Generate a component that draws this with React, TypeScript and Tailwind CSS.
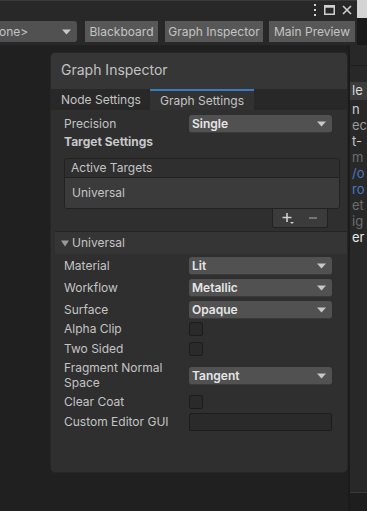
import React from "react";

const Arrow = () => (
  <svg width="9" height="6" viewBox="0 0 9 6" className="shrink-0">
    <path d="M0 0.5 H9 L4.5 5.5 Z" fill="#c8c8c8" />
  </svg>
);

const Dropdown = ({ value }: { value: string }) => (
  <div className="w-[143px] h-[18px] rounded-[3px] bg-[#515151] border-b border-[#3a3a3a] flex items-center justify-between pl-[3px] pr-[6px] text-[#e6e6e6] font-semibold text-[12px]">
    <span>{value}</span>
    <Arrow />
  </div>
);

const Check = () => (
  <div className="w-[14px] h-[14px] rounded-[2px] bg-[#2a2a2a] border border-[#1c1c1c]" />
);

const Row = ({ label, h, mt, children }: { label: React.ReactNode; h: string; mt: string; children: React.ReactNode }) => (
  <div className={`flex items-center pl-[13px] ${h} ${mt}`}>
    <div className="w-[125px] pb-[2px] text-[12px] leading-[15px] text-[#c4c4c4]">{label}</div>
    {children}
  </div>
);

const sideLines = [
  { t: "n", c: "text-[#d0d0d0]" },
  { t: "ec", c: "text-[#9a9a9a]" },
  { t: "t-", c: "text-[#c8c8c8]" },
  { t: "m", c: "text-[#6e6e6e]" },
  { t: "/o", c: "text-[#4a78c0]" },
  { t: "ro", c: "text-[#4a78c0]" },
  { t: "et", c: "text-[#6e6e6e]" },
  { t: "ig", c: "text-[#6e6e6e]" },
  { t: "er", c: "text-[#e8e8e8]" },
];

export default function App() {
  return (
    <div
      className="w-[367px] h-[511px] bg-[#202020] overflow-hidden flex flex-col"
      style={{ fontFamily: "Inter, 'Noto Sans', sans-serif" }}
    >
      {/* title strip */}
      <div className="flex h-[18px] shrink-0">
        <div className="w-[357px] bg-[#282828] border-t border-[#3a3a3a] flex items-center justify-end gap-[7px] pr-[5px]">
          <svg width="4" height="12" viewBox="0 0 4 12">
            <rect x="1" y="0" width="2" height="2" fill="#d0d0d0" />
            <rect x="1" y="5" width="2" height="2" fill="#d0d0d0" />
            <rect x="1" y="10" width="2" height="2" fill="#d0d0d0" />
          </svg>
          <svg width="11" height="10" viewBox="0 0 11 10">
            <rect x="0.75" y="0.75" width="9.5" height="8.5" fill="none" stroke="#d0d0d0" strokeWidth="1.5" />
            <rect x="0.75" y="0.75" width="9.5" height="2" fill="#d0d0d0" />
          </svg>
          <svg width="10" height="10" viewBox="0 0 10 10">
            <path d="M1 1 L9 9 M9 1 L1 9" stroke="#d0d0d0" strokeWidth="1.6" />
          </svg>
        </div>
        <div className="flex-1 bg-[#d4d4d4]" />
      </div>

      {/* toolbar */}
      <div className="flex h-[27px] shrink-0">
        <div className="w-[357px] bg-[#282828] flex items-center text-[12px] text-[#c4c4c4]">
          <div className="w-[77px] h-[21px] bg-[#515151] rounded-r-[3px] flex items-center justify-between pr-[6px]">
            <span className="-ml-[1px]">one&gt;</span>
            <Arrow />
          </div>
          <div className="ml-[8px] w-[73px] h-[21px] bg-[#575757] flex items-center justify-center">Blackboard</div>
          <div className="ml-[7px] w-[98px] h-[21px] bg-[#575757] flex items-center justify-center">Graph Inspector</div>
          <div className="ml-[6px] w-[86px] h-[21px] bg-[#575757] flex items-center justify-center">Main Preview</div>
        </div>
        <div className="flex-1 bg-[#1a1a1a]" />
      </div>

      {/* body */}
      <div className="flex flex-1">
        <div className="w-[350px] pl-[50px] pt-[7px]">
          <div className="w-[298px] h-[421px] rounded-[5px] bg-[#2f2f2f] border border-[#262626] overflow-hidden flex flex-col">
            <div className="h-[36px] bg-[#363636] flex items-center pl-[10px] pb-[3px] text-[14px] text-[#c2c2c2]">Graph Inspector</div>
            <div className="h-[21px] bg-[#282828] flex text-[12px] text-[#c4c4c4]">
              <div className="w-[99px] flex items-center pl-[10px]">Node Settings</div>
              <div className="w-[104px] bg-[#323232] border-t-2 border-[#3a7ac0] flex items-center pl-[10px]">Graph Settings</div>
            </div>

            <Row label="Precision" h="h-[18px]" mt="mt-[5px]">
              <Dropdown value="Single" />
            </Row>
            <div className="pl-[13px] h-[18px] mt-[1px] pb-[2px] flex items-center text-[12px] font-bold text-[#c8c8c8]">Target Settings</div>

            <div className="ml-[13px] mt-[6px] w-[276px] rounded-[3px] border border-[#222] overflow-hidden">
              <div className="h-[19px] bg-[#2f2f2f] border-b border-[#222] flex items-center pl-[6px] text-[12px] text-[#c4c4c4]">Active Targets</div>
              <div className="h-[30px] bg-[#3b3b3b] flex items-center pl-[7px] text-[12px] text-[#c4c4c4]">Universal</div>
            </div>
            <div className="flex justify-end pr-[19px]">
              <div className="w-[56px] h-[19px] bg-[#3b3b3b] rounded-b-[3px] border-x border-b border-[#222] flex items-center justify-center gap-[14px] text-[#c8c8c8]">
                <svg width="12" height="12" viewBox="0 0 12 12">
                  <path d="M5 1 V10 M0.5 5.5 H9.5" stroke="#d0d0d0" strokeWidth="1.6" />
                  <path d="M8 10 H12 L10 12 Z" fill="#d0d0d0" />
                </svg>
                <svg width="10" height="10" viewBox="0 0 10 10">
                  <path d="M1 5 H9" stroke="#8a8a8a" strokeWidth="1.4" />
                </svg>
              </div>
            </div>

            <div className="ml-[4px] mt-[3px] h-[23px] bg-[#353535] border-t border-[#242424] flex items-center pl-[6px] gap-[3px] text-[12px] text-[#c4c4c4]">
              <svg width="8" height="7" viewBox="0 0 8 7">
                <path d="M0 0.5 H8 L4 6.5 Z" fill="#9a9a9a" />
              </svg>
              <span>Universal</span>
            </div>

            <Row label="Material" h="h-[18px]" mt="mt-[3px]">
              <Dropdown value="Lit" />
            </Row>
            <Row label="Workflow" h="h-[18px]" mt="mt-[4px]">
              <Dropdown value="Metallic" />
            </Row>
            <Row label="Surface" h="h-[18px]" mt="mt-[4px]">
              <Dropdown value="Opaque" />
            </Row>
            <Row label="Alpha Clip" h="h-[18px]" mt="mt-[1px]">
              <Check />
            </Row>
            <Row label="Two Sided" h="h-[18px]" mt="mt-[2px]">
              <Check />
            </Row>
            <Row label={<>Fragment Normal<br />Space</>} h="h-[30px]" mt="mt-[3px]">
              <Dropdown value="Tangent" />
            </Row>
            <Row label="Clear Coat" h="h-[18px]" mt="mt-[2px]">
              <Check />
            </Row>
            <Row label="Custom Editor GUI" h="h-[18px]" mt="mt-[2px]">
              <div className="w-[143px] h-[18px] rounded-[2px] bg-[#2a2a2a] border border-[#1c1c1c]" />
            </Row>
          </div>
        </div>

        <div className="w-[7px] bg-[#1c1c1c]" />
        <div className="flex-1 bg-[#282828] border-l border-[#1a1a1a] flex flex-col">
          <div className="h-[21px] border-b border-[#1e1e1e]" />
          <div className="h-[16px]" />
          <div className="h-[18px] flex items-center pl-[2px] text-[13px] bg-[#3c3c3c] text-[#d8d8d8]">le</div>
          <div className="h-[2px]" />
          {sideLines.map((l) => (
            <div
              key={l.t}
              className={`h-[16px] flex items-center pl-[2px] text-[13px] whitespace-nowrap ${l.c}`}
            >
              {l.t}
            </div>
          ))}
          <div className="flex-1" />
          <div className="h-[1px] bg-[#3a3a3a]" />
          <div className="h-[18px] bg-[#1e1e1e]" />
        </div>
      </div>
    </div>
  );
}
